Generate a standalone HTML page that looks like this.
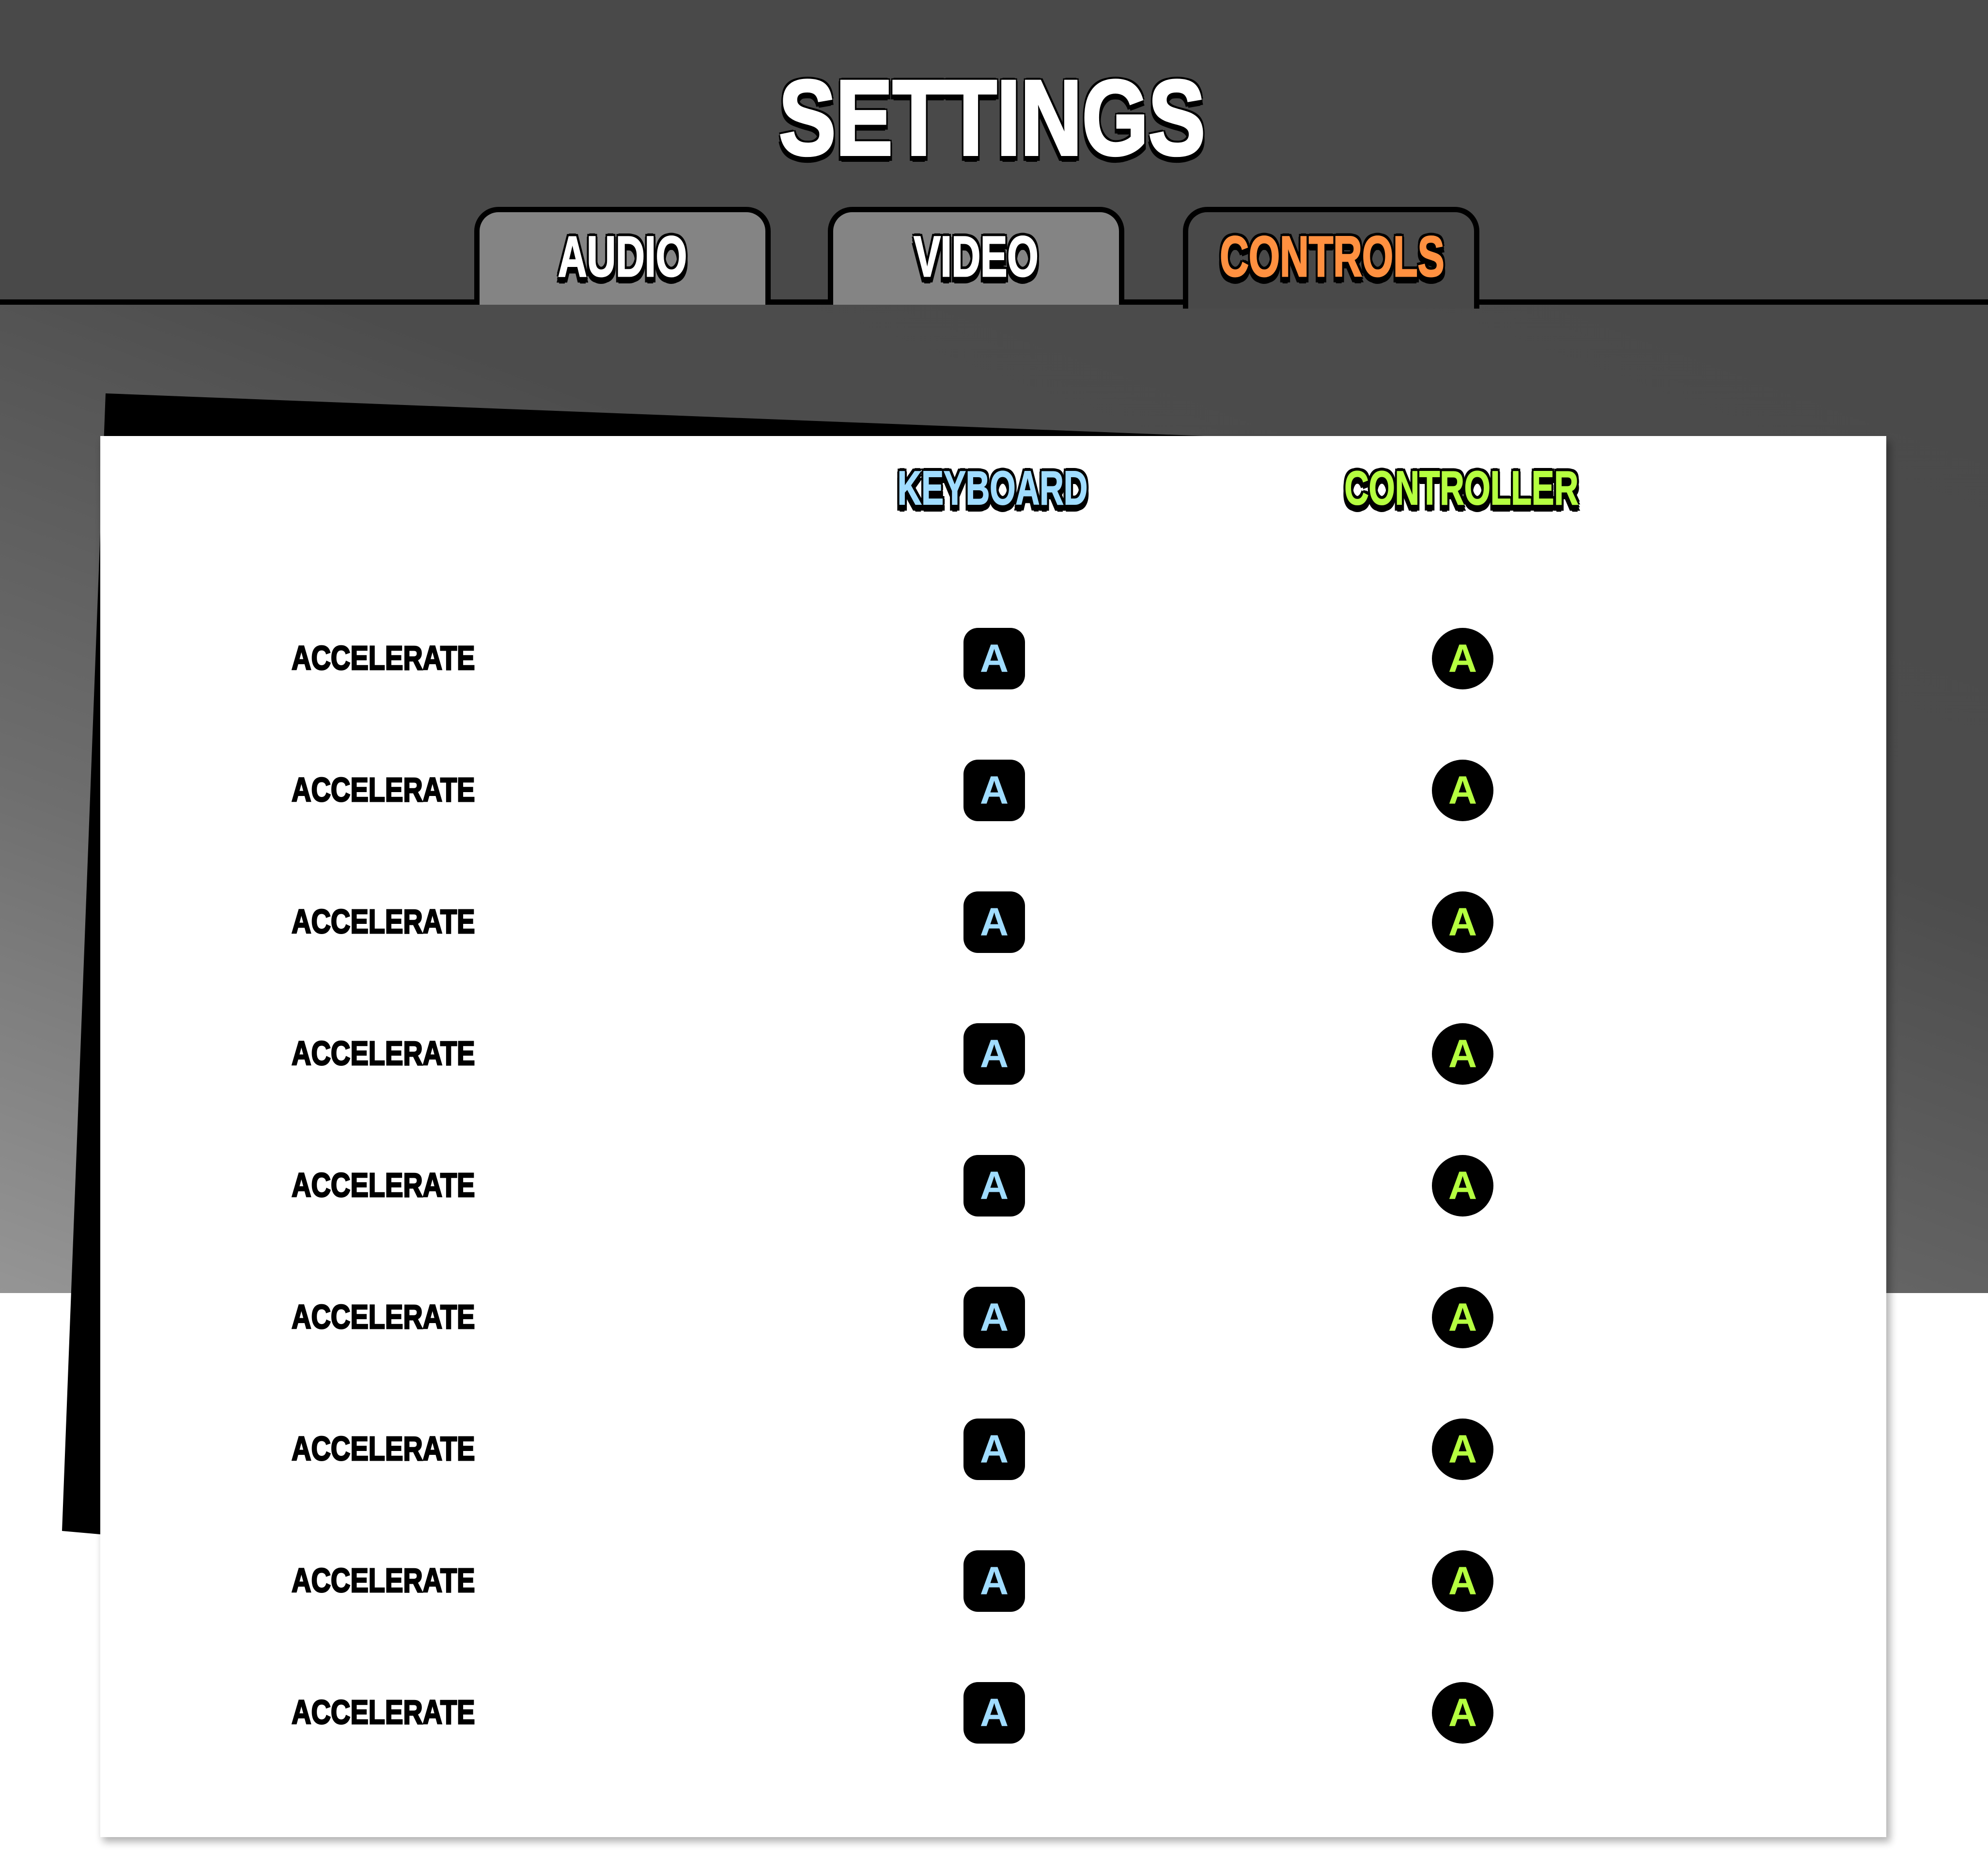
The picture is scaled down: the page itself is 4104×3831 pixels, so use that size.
<!DOCTYPE html>
<html><head><meta charset="utf-8"><style>
*{margin:0;padding:0;box-sizing:border-box}
body{width:4104px;height:3831px;position:relative;overflow:hidden;background:#fff;font-family:"Liberation Sans",sans-serif}
.bgtop{position:absolute;left:0;top:0;width:4104px;height:630px;background:#494949}
.bgmid{position:absolute;left:0;top:620px;width:4104px;height:2049px;background:linear-gradient(200deg,#4a4a4a 0%,#4c4c4c 35%,#6e6e6e 70%,#959595 100%)}
.line{position:absolute;left:0;top:618px;width:4104px;height:11px;background:#000}
.tab{position:absolute;top:427px;width:612px;height:202px;border:11px solid #000;border-bottom:none;border-radius:50px 50px 0 0;background:#848484}
.tab.active{background:#494949;height:210px}
.t{position:absolute;white-space:nowrap;font-weight:bold;color:#fff;transform-origin:center center;text-align:center}
.o{ text-shadow: -7px 0 #000,7px 0 #000,0 -7px #000,0 7px #000,-6px -6px #000,6px 6px #000,-6px 6px #000,6px -6px #000,0 15px #000,7px 13px #000,-7px 13px #000}
.lbl{position:absolute;left:602px;font-weight:bold;font-size:70px;color:#000;white-space:nowrap;transform:scaleX(.80);transform-origin:left center;line-height:72px;-webkit-text-stroke:3px #000}
.key{position:absolute;left:1989px;width:127px;height:127px;background:#000;border-radius:30px;color:#a0dcff;font-weight:bold;font-size:82px;text-align:center;line-height:127px}
.btn{position:absolute;left:2956px;width:127px;height:127px;background:#000;border-radius:50%;color:#b5ff40;font-weight:bold;font-size:82px;text-align:center;line-height:127px}
</style></head><body>
<div class="bgtop"></div>
<div class="bgmid"></div>
<div class="line"></div>
<div class="tab" style="left:979px"></div>
<div class="tab" style="left:1709px"></div>
<div class="tab active" style="left:2442px"></div>

<div class="t o" style="left:1348px;top:138px;width:1400px;font-size:220px;line-height:210px;transform:scaleX(.80);-webkit-text-stroke:6px #fff">SETTINGS</div>
<div class="t o" style="left:985px;top:475px;width:600px;font-size:118px;line-height:110px;transform:scaleX(.70);-webkit-text-stroke:3px #fff">AUDIO</div>
<div class="t o" style="left:1715px;top:475px;width:600px;font-size:118px;line-height:110px;transform:scaleX(.70);-webkit-text-stroke:3px #fff">VIDEO</div>
<div class="t o" style="left:2350px;top:475px;width:800px;font-size:118px;line-height:110px;color:#ff9040;transform:scaleX(.70);-webkit-text-stroke:3px #ff9040">CONTROLS</div>

<svg style="position:absolute;left:0;top:0" width="4104" height="3831">
<defs><filter id="sh" x="-5%" y="-5%" width="110%" height="110%"><feGaussianBlur stdDeviation="8"/></filter></defs>
<rect x="212" y="912" width="3690" height="2890" fill="#000" opacity=".3" filter="url(#sh)"/>
<polygon points="218,812 2486,900 207,900 207,3167 128,3160" fill="#000"/>
<rect x="207" y="900" width="3687" height="2892" fill="#fff"/>
</svg>

<div class="t o" style="left:1749px;top:962px;width:600px;font-size:98px;line-height:90px;color:#a0dcff;transform:scaleX(.70);-webkit-text-stroke:2px #a0dcff">KEYBOARD</div>
<div class="t o" style="left:2667px;top:962px;width:700px;font-size:98px;line-height:90px;color:#b5ff40;transform:scaleX(.71);-webkit-text-stroke:2px #b5ff40">CONTROLLER</div>

<div class="lbl" style="top:1322px">ACCELERATE</div><div class="key" style="top:1296px">A</div><div class="btn" style="top:1296px">A</div>
<div class="lbl" style="top:1594px">ACCELERATE</div><div class="key" style="top:1568px">A</div><div class="btn" style="top:1568px">A</div>
<div class="lbl" style="top:1866px">ACCELERATE</div><div class="key" style="top:1840px">A</div><div class="btn" style="top:1840px">A</div>
<div class="lbl" style="top:2138px">ACCELERATE</div><div class="key" style="top:2112px">A</div><div class="btn" style="top:2112px">A</div>
<div class="lbl" style="top:2410px">ACCELERATE</div><div class="key" style="top:2384px">A</div><div class="btn" style="top:2384px">A</div>
<div class="lbl" style="top:2682px">ACCELERATE</div><div class="key" style="top:2656px">A</div><div class="btn" style="top:2656px">A</div>
<div class="lbl" style="top:2954px">ACCELERATE</div><div class="key" style="top:2928px">A</div><div class="btn" style="top:2928px">A</div>
<div class="lbl" style="top:3226px">ACCELERATE</div><div class="key" style="top:3200px">A</div><div class="btn" style="top:3200px">A</div>
<div class="lbl" style="top:3498px">ACCELERATE</div><div class="key" style="top:3472px">A</div><div class="btn" style="top:3472px">A</div>
</body></html>
